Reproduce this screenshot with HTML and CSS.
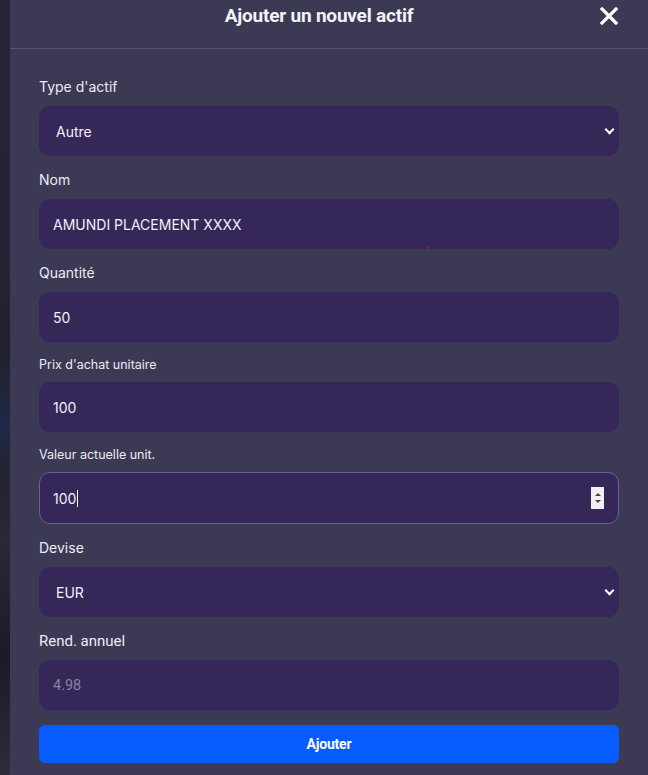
FILE: index.html
```html
<!DOCTYPE html>
<html lang="fr">
<head>
<meta charset="utf-8">
<title>Ajouter un nouvel actif</title>
<link rel="stylesheet" href="styles.css">
</head>
<body>
<div class="page">
  <div class="backdrop"></div>
  <div class="modal">
    <header class="modal-header">
      <h1 class="modal-title">Ajouter un nouvel actif</h1>
      <button class="close-btn" type="button" aria-label="Fermer">
        <svg viewBox="0 0 18 18" width="18" height="18"><path d="M2 2 L16 16 M16 2 L2 16" stroke="#fff" stroke-width="3.2" stroke-linecap="square" fill="none"/></svg>
      </button>
    </header>
    <form class="form">
      <div class="field">
        <label class="label">Type d'actif</label>
        <div class="control select">Autre</div>
      </div>
      <div class="field">
        <label class="label">Nom</label>
        <div class="control">AMUNDI PLACEMENT XXXX</div>
        <span class="speck"></span>
      </div>
      <div class="field">
        <label class="label">Quantité</label>
        <div class="control">50</div>
      </div>
      <div class="field">
        <label class="label small">Prix d'achat unitaire</label>
        <div class="control">100</div>
      </div>
      <div class="field">
        <label class="label small">Valeur actuelle unit.</label>
        <div class="control focused">100<span class="caret"></span>
          <span class="spinner"><span class="tri up"></span><span class="tri down"></span></span>
        </div>
      </div>
      <div class="field">
        <label class="label">Devise</label>
        <div class="control select">EUR</div>
      </div>
      <div class="field">
        <label class="label roboto">Rend. annuel</label>
        <div class="control placeholder">4.98</div>
      </div>
      <button class="submit" type="button">Ajouter</button>
    </form>
  </div>
</div>
</body>
</html>
```
FILE: styles.css
```css
* { box-sizing: border-box; }
html, body { margin: 0; padding: 0; }
body {
  background: #22212e;
  font-family: "Inter", "Noto Sans", sans-serif;
  color: #eceaf3;
}
.page {
  display: flex;
  width: 648px;
  height: 775px;
  overflow: hidden;
}
.backdrop {
  width: 10px;
  flex: none;
  background: linear-gradient(180deg, #262538 0%, #242336 30%, #21202c 45%, #1f2946 55%, #23222f 62%, #2a2838 70%, #1b1a27 85%, #2e2c3c 100%);
}
.modal {
  flex: 1;
  background: #3c3955;
  display: flex;
  flex-direction: column;
}
.modal-header {
  height: 49px;
  border-bottom: 1px solid #57536f;
  display: flex;
  align-items: flex-start;
  padding: 4px 29px 0 29px;
}
.modal-title {
  flex: 1;
  margin: 0;
  text-align: center;
  font-family: "Roboto", sans-serif;
  font-weight: 700;
  font-size: 19px;
  line-height: 24px;
  color: #f4f3f8;
  letter-spacing: -0.2px;
}
.close-btn {
  width: 20px;
  height: 24px;
  border: 0;
  padding: 0;
  background: transparent;
  display: flex;
  align-items: center;
  justify-content: center;
}
.form {
  position: relative;
  padding: 28px 29px 0 29px;
  display: flex;
  flex-direction: column;
  gap: 14px;
}
.field {
  position: relative;
  display: flex;
  flex-direction: column;
}
.label {
  font-size: 14px;
  line-height: 20px;
  margin-bottom: 9px;
  color: #ecebf2;
}
.label.small {
  font-size: 12.5px;
  line-height: 17px;
}
.label.roboto {
  font-family: "Roboto", sans-serif;
  font-size: 15px;
}
.control {
  position: relative;
  height: 50px;
  border-radius: 11px;
  background: #352859;
  padding: 0 14px;
  display: flex;
  align-items: center;
  font-size: 14px;
  color: #f1eff7;
}
.control.select {
  padding-left: 17px;
}
.control.select::after {
  content: "";
  position: absolute;
  right: 6px;
  top: 50%;
  width: 5px;
  height: 5px;
  margin-top: -5px;
  border-right: 2px solid #fff;
  border-bottom: 2px solid #fff;
  transform: rotate(45deg);
}
.control.focused {
  height: 52px;
  border: 1px solid #6b5f8f;
  padding-left: 13px;
}
.caret {
  display: inline-block;
  width: 1px;
  height: 17px;
  background: #fff;
  margin-left: 1px;
}
.spinner {
  position: absolute;
  right: 14px;
  top: 14px;
  width: 13px;
  height: 22px;
  background: #f1f1f1;
  display: flex;
  flex-direction: column;
  align-items: center;
  justify-content: center;
  gap: 4px;
}
.tri {
  width: 0;
  height: 0;
  border-left: 3px solid transparent;
  border-right: 3px solid transparent;
}
.tri.up { border-bottom: 3px solid #444; }
.tri.down { border-top: 3px solid #444; }
.control.placeholder {
  font-family: "Roboto", sans-serif;
  color: #8a849f;
  font-size: 14.5px;
}
.speck {
  position: absolute;
  left: 388px;
  top: 76px;
  width: 1px;
  height: 3px;
  background: #d01040;
}
.submit {
  margin-top: 1px;
  height: 38px;
  border: 0;
  border-radius: 6px;
  background: #075cff;
  color: #fff;
  font-family: "Roboto", sans-serif;
  font-weight: 700;
  font-size: 14px;
  letter-spacing: -0.2px;
}
```
